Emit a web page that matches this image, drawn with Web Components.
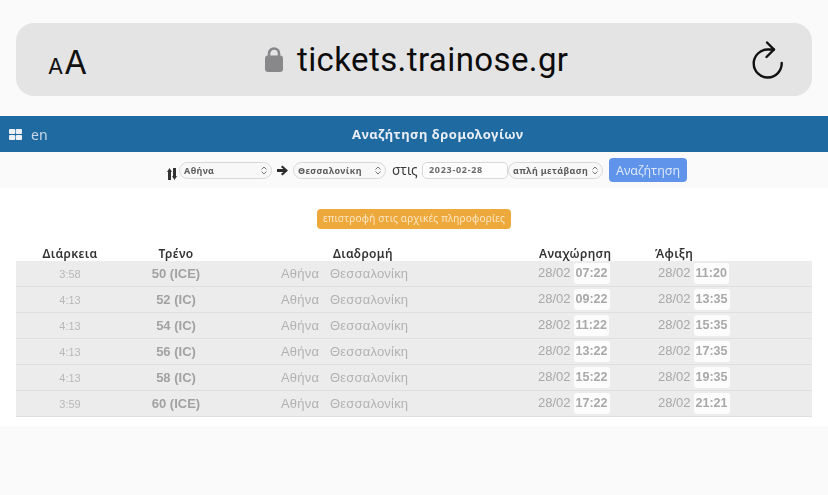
<!DOCTYPE html>
<html lang="el">
<head>
<meta charset="utf-8">
<title>tickets.trainose.gr</title>
<style>
  html, body { margin: 0; padding: 0; background: #fafafa; }
  body { width: 828px; height: 495px; overflow: hidden; font-family: "Liberation Sans", Arial, sans-serif; }
</style>
</head>
<body>
<safari-bar url="tickets.trainose.gr"></safari-bar>
<site-header title="Αναζήτηση δρομολογίων" lang="en"></site-header>
<search-form></search-form>
<results-panel></results-panel>

<script>
class SafariBar extends HTMLElement {
  constructor() {
    super();
    this.attachShadow({ mode: 'open' });
    this.shadowRoot.innerHTML = `
      <style>
      :host { display: block; padding: 23px 16px 20px; }
      .bar {
        height: 73px;
        background: #e4e4e5;
        border-radius: 18px;
        display: grid;
        grid-template-columns: 249px 1fr 60px;
        align-items: center;
        color: #111;
        font-family: Inter, Roboto, sans-serif;
      }
      .aa { padding-left: 32px; font-weight: 400; line-height: 1; padding-top: 5px; display: flex; align-items: baseline; gap: 1px; }
      .aa .s { font-size: 22px; }
      .aa .b { font-size: 33px; }
      .url { display: flex; align-items: center; gap: 14px; }
      .url span { font-size: 33px; font-family: Roboto, sans-serif; letter-spacing: .4px; line-height: 1; color: #0c0c0c; }
      svg { display: block; }
      </style>
      <div class="bar">
        <div class="aa"><span class="s">A</span><span class="b">A</span></div>
        <div class="url">
          <svg width="18" height="25" viewBox="0 0 18 25"><path d="M4 10V6.5a5 5 0 0 1 10 0V10" fill="none" stroke="#88888b" stroke-width="2.6"/><rect x="0" y="8.5" width="18" height="16.5" rx="3" fill="#88888b"/></svg>
          <span>${this.getAttribute('url')}</span>
        </div>
        <svg width="32" height="40" viewBox="0 0 32 40" fill="none" stroke="#111" stroke-width="2.4" stroke-linecap="round" stroke-linejoin="round"><path d="M22 9.5H16A14 14 0 1 0 29.7 23"/><path d="M15 2.5 22 9.5 14.5 17"/></svg>
      </div>
    `;
  }
}

class SiteHeader extends HTMLElement {
  constructor() {
    super();
    this.attachShadow({ mode: 'open' });
    this.shadowRoot.innerHTML = `
      <style>
      :host { display: block; }
      .head {
        height: 36px;
        background: #1f6aa0;
        color: #e8eef4;
        display: flex;
        align-items: center;
        font-family: "Noto Sans", "Open Sans", sans-serif;
      }
      .menu { display: flex; align-items: center; gap: 9px; padding-left: 9px; width: 352px; box-sizing: border-box; filter: blur(.3px); }
      .lang { font-size: 14px; color: #c9d8e6; }
      h1 { margin: 0; font-size: 13px; font-weight: 700; letter-spacing: .5px; filter: blur(.35px); }
      svg { display: block; }
      </style>
      <div class="head">
        <div class="menu">
          <svg width="13" height="11" viewBox="0 0 13 11" fill="#eef2f6"><rect width="6.2" height="5" rx="1"/><rect x="6.8" width="6.2" height="5" rx="1"/><rect y="6" width="6.2" height="5" rx="1"/><rect x="6.8" y="6" width="6.2" height="5" rx="1"/></svg>
          <span class="lang">${this.getAttribute('lang')}</span>
        </div>
        <h1>${this.getAttribute('title')}</h1>
      </div>
    `;
  }
}

class SelectBox extends HTMLElement {
  constructor() {
    super();
    this.attachShadow({ mode: 'open' });
    this.shadowRoot.innerHTML = `
      <style>
      :host { display: block; }
      .box {
        height: 17px;
        box-sizing: border-box;
        border: 1px solid #d8d8d8;
        border-radius: 9px;
        background: #f8f8f8;
        display: flex;
        align-items: center;
        justify-content: space-between;
        padding: 0 3px 0 4px;
        font-family: "Noto Sans", sans-serif;
        font-size: 9px;
        font-weight: 700;
        letter-spacing: .4px;
        color: #5c5c5c;
        filter: blur(.35px);
      }
      svg { display: block; flex: none; }
      </style>
      <div class="box">
        <slot></slot>
        <svg width="8" height="9" viewBox="0 0 8 9" fill="none" stroke="#777" stroke-width="1"><path d="M1.5 3.5 4 1l2.5 2.5M1.5 5.5 4 8l2.5-2.5"/></svg>
      </div>
    `;
  }
}

class SearchForm extends HTMLElement {
  constructor() {
    super();
    this.attachShadow({ mode: 'open' });
    this.shadowRoot.innerHTML = `
      <style>
      :host { display: block; }
      .form {
        height: 36px;
        box-sizing: border-box;
        padding-left: 167px;
        display: flex;
        align-items: center;
        font-family: "Noto Sans", sans-serif;
        background: #fafafa;
      }
      .swap { margin: 7px 2px 0 0; }
      .from { width: 93px; }
      .to { width: 93px; }
      .go { margin: 0 5px 0 5px; }
      .at { margin: 0 6px; font-size: 13.5px; color: #3a3a3a; width: 24px; filter: blur(.25px); }
      .date {
        width: 86px;
        height: 17px;
        box-sizing: border-box;
        border: 1px solid #d8d8d8;
        border-radius: 5px;
        background: #fdfdfd;
        padding-left: 6px;
        font-size: 9px;
        font-weight: 700;
        letter-spacing: .7px;
        line-height: 14px;
        color: #6c6c6c;
        filter: blur(.35px);
      }
      .trip { width: 95px; }
      button {
        margin-left: 6px;
        width: 78px;
        height: 24px;
        padding: 0;
        border: 0;
        border-radius: 4px;
        background: #5f94ea;
        color: #dbe6f8;
        font-family: "Noto Sans", sans-serif;
        font-size: 12.5px;
        filter: blur(.3px);
      }
      svg { display: block; flex: none; }
      </style>
      <div class="form">
        <svg class="swap" width="10" height="12" viewBox="0 0 10 12" fill="#333"><path d="M2.5 0 5 4H4v8H1V4H0zM7.5 12 5 8h1V0h3v8h1z"/></svg>
        <select-box class="from">Αθήνα</select-box>
        <svg class="go" width="11" height="11" viewBox="0 0 11 11" fill="#2c2c2c"><path d="M5.5.5 11 5.5l-5.5 5-1.6-1.6L6.4 7H0V4h6.4L3.9 2.1z"/></svg>
        <select-box class="to">Θεσσαλονίκη</select-box>
        <span class="at">στις</span>
        <div class="date">2023-02-28</div>
        <select-box class="trip">απλή μετάβαση</select-box>
        <button>Αναζήτηση</button>
      </div>
    `;
  }
}

class TrainRow extends HTMLElement {
  constructor() {
    super();
    this.attachShadow({ mode: 'open' });
    const time = (name) => this.getAttribute(name);
    this.shadowRoot.innerHTML = `
      <style>
      :host { display: block; }
      .row {
        height: 25px;
        border-bottom: 1px solid #dfdfdf;
        background: #ececec;
        display: grid;
        grid-template-columns: 108px 104px 270px 120px 194px;
        align-items: center;
        font-size: 13px;
        color: #a8a8a8;
        filter: blur(.35px);
      }
      .dur { text-align: center; font-size: 11px; color: #b8b8b8; }
      .train { text-align: center; font-weight: 700; color: #a2a2a2; }
      .route { padding-left: 53px; color: #b2b2b2; letter-spacing: .2px; }
      .route span + span { margin-left: 7px; }
      .stop { padding-left: 40px; display: flex; align-items: baseline; gap: 3px; }
      .stop b {
        background: #fcfcfc;
        border-radius: 3px;
        padding: 0 2px;
        line-height: 21px;
        color: #a8a8a8;
        font-size: 12.5px;
        font-weight: 700;
      }
      </style>
      <div class="row">
        <div class="dur">${time('dur')}</div>
        <div class="train">${time('train')}</div>
        <div class="route"><span>Αθήνα</span> <span>Θεσσαλονίκη</span></div>
        <div class="stop">28/02 <b>${time('dep')}</b></div>
        <div class="stop">28/02 <b>${time('arr')}</b></div>
      </div>
    `;
  }
}

const TRAINS = [
  ['3:58', '50 (ICE)', '07:22', '11:20'],
  ['4:13', '52 (IC)', '09:22', '13:35'],
  ['4:13', '54 (IC)', '11:22', '15:35'],
  ['4:13', '56 (IC)', '13:22', '17:35'],
  ['4:13', '58 (IC)', '15:22', '19:35'],
  ['3:59', '60 (ICE)', '17:22', '21:21']
];

class ResultsPanel extends HTMLElement {
  constructor() {
    super();
    this.attachShadow({ mode: 'open' });
    const rows = TRAINS.map(t =>
      `<train-row dur="${t[0]}" train="${t[1]}" dep="${t[2]}" arr="${t[3]}"></train-row>`
    ).join('');
    this.shadowRoot.innerHTML = `
      <style>
      :host { display: block; background: #fff; padding: 21px 16px 8px; height: 209px; }
      .back { display: flex; justify-content: center; margin-bottom: 16px; }
      .back span {
        width: 194px;
        height: 20px;
        border-radius: 4px;
        background: #eea93c;
        color: #fbe6c4;
        font-family: "Noto Sans", sans-serif;
        font-size: 10px;
        letter-spacing: .2px;
        line-height: 19px;
        text-align: center;
        filter: blur(.3px);
      }
      .cols {
        height: 16px;
        display: grid;
        grid-template-columns: 108px 104px 270px 120px 194px;
        align-items: center;
        font-family: "Noto Sans", sans-serif;
        font-size: 12px;
        font-weight: 600;
        letter-spacing: .35px;
        color: #333;
        filter: blur(.25px);
      }
      .c { text-align: center; }
      .l { padding-left: 41px; }
      .l + .l { padding-left: 37px; }
      </style>
      <div class="back"><span>επιστροφή στις αρχικές πληροφορίες</span></div>
      <div class="cols">
        <div class="c">Διάρκεια</div>
        <div class="c">Τρένο</div>
        <div class="c">Διαδρομή</div>
        <div class="l">Αναχώρηση</div>
        <div class="l">Άφιξη</div>
      </div>
      ${rows}
    `;
  }
}

customElements.define('safari-bar', SafariBar);
customElements.define('site-header', SiteHeader);
customElements.define('select-box', SelectBox);
customElements.define('search-form', SearchForm);
customElements.define('train-row', TrainRow);
customElements.define('results-panel', ResultsPanel);
</script>
</body>
</html>
